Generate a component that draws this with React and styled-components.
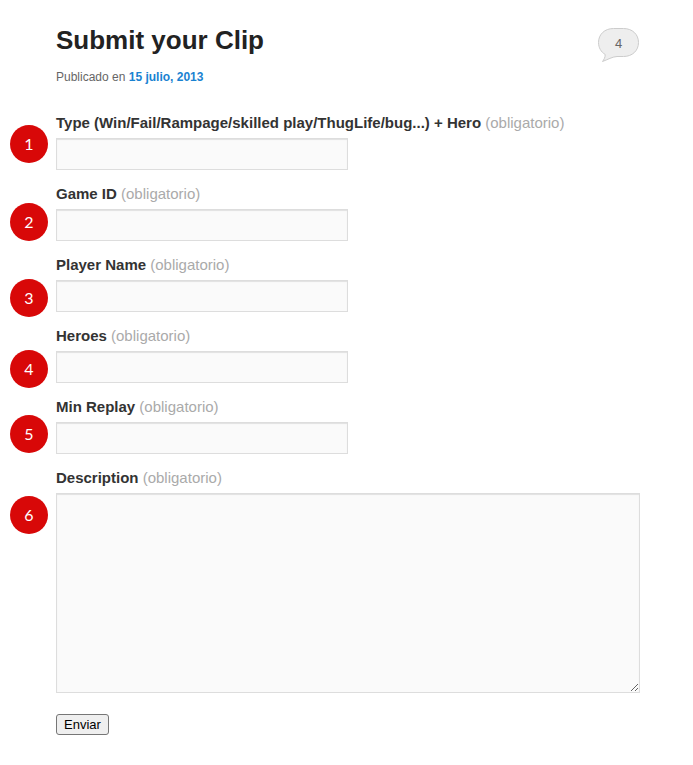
import React from "react";
import styled, { createGlobalStyle } from "styled-components";

const fields = [
  { id: "type", label: "Type (Win/Fail/Rampage/skilled play/ThugLife/bug...) + Hero", pin: 14 },
  { id: "game", label: "Game ID", pin: 21 },
  { id: "player", label: "Player Name", pin: 26 },
  { id: "heroes", label: "Heroes", pin: 26 },
  { id: "replay", label: "Min Replay", pin: 20 },
  { id: "description", label: "Description", pin: 30, multiline: true },
];

function Field({ id, label, pin, multiline, number }) {
  return (
    <FieldWrap>
      <Pin $top={pin}>{number}</Pin>
      <Label htmlFor={id}>
        {label} <Required>(obligatorio)</Required>
      </Label>
      {multiline ? <TextArea id={id} name={id} /> : <TextInput id={id} name={id} type="text" />}
    </FieldWrap>
  );
}

function App() {
  return (
    <Page>
      <GlobalStyle />
      <Header>
        <div>
          <Title>Submit your Clip</Title>
          <Meta>
            Publicado en <DateLink href="#">15 julio, 2013</DateLink>
          </Meta>
        </div>
        <Comments href="#comments" aria-label="4 comentarios">
          <svg width="41" height="35" viewBox="0 0 41 35">
            <path
              d="M15.500 .5H25.500C34.500 .5 40.500 6.500 40.500 14.500S34.500 28.500 25.500 28.500H19C14 28.800 10 31.500 4.500 33.500C6 31.500 7.200 29.500 7.200 26.500C3 24 .5 19.500 .5 14.500C.5 6.500 6.500 .5 15.500 .5Z"
              fill="#eee"
              stroke="#ccc"
            />
          </svg>
          <Count>4</Count>
        </Comments>
      </Header>
      <form onSubmit={(e) => e.preventDefault()}>
        {fields.map((field, i) => (
          <Field key={field.id} number={i + 1} {...field} />
        ))}
        <Submit type="submit">Enviar</Submit>
      </form>
    </Page>
  );
}

export default App;

const GlobalStyle = createGlobalStyle`
  * {
    box-sizing: border-box;
  }
  body {
    margin: 0;
    background: #fff;
    color: #333;
    font-family: "Liberation Sans", Arial, sans-serif;
    font-size: 15px;
    line-height: 24px;
  }
`;

const Page = styled.main`
  padding: 16px 53px 30px 56px;
`;

const Header = styled.header`
  display: flex;
  justify-content: space-between;
  align-items: flex-start;
  margin-bottom: 21px;
`;

const Title = styled.h1`
  margin: 0;
  color: #222;
  font-size: 26px;
  line-height: 48px;
`;

const Meta = styled.div`
  color: #666;
  font-size: 12px;
  line-height: 26px;
`;

const DateLink = styled.a`
  color: #1982d1;
  font-weight: bold;
  text-decoration: none;
`;

const Comments = styled.a`
  position: relative;
  margin: 12px 1px 0 0;
  color: #666;
  font-size: 13px;
  text-decoration: none;
  svg {
    display: block;
  }
`;

const Count = styled.span`
  position: absolute;
  top: 4px;
  left: 0;
  width: 100%;
  text-align: center;
`;

const FieldWrap = styled.div`
  position: relative;
  margin-bottom: 12px;
`;

const Pin = styled.span`
  position: absolute;
  top: ${(props) => props.$top}px;
  left: -46px;
  width: 38px;
  height: 38px;
  border-radius: 50%;
  background: #d80808;
  color: #fff;
  font-family: Lato, sans-serif;
  font-size: 16px;
  line-height: 38px;
  text-align: center;
`;

const Label = styled.label`
  display: block;
  margin-bottom: 3px;
  font-weight: bold;
`;

const Required = styled.span`
  color: #aaa;
  font-weight: normal;
`;

const TextInput = styled.input`
  display: block;
  width: 50%;
  height: 32px;
  padding: 4px;
  border: 1px solid #ddd;
  border-radius: 0;
  background: #fafafa;
  box-shadow: inset 0 1px 1px rgba(0, 0, 0, 0.1);
  color: #888;
  font: inherit;
`;

const TextArea = styled(TextInput).attrs({ as: "textarea" })`
  width: 100%;
  height: 200px;
  resize: both;
`;

const Submit = styled.button`
  margin-top: 9px;
  padding: 1px 7px;
  border: 1px solid #767676;
  border-radius: 3px;
  background: #efefef;
  color: #000;
  font-family: inherit;
  font-size: 13px;
  line-height: 17px;
`;
